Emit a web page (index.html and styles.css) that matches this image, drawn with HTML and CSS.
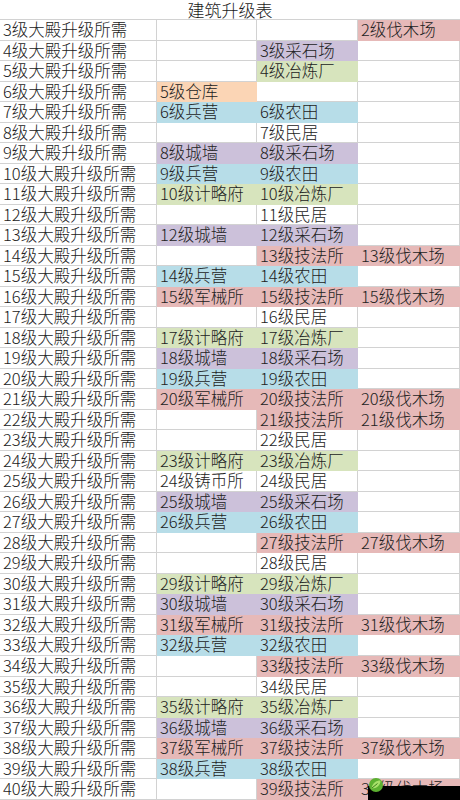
FILE: index.html
```html
<!DOCTYPE html>
<html lang="zh-CN">
<head>
<meta charset="utf-8">
<title>建筑升级表</title>
<link rel="stylesheet" href="styles.css">
</head>
<body>
<div class="sheet">
  <div class="title">建筑升级表</div>

  <div class="c">3级大殿升级所需</div><div class="c"></div><div class="c"></div><div class="c pink">2级伐木场</div>
  <div class="c">4级大殿升级所需</div><div class="c"></div><div class="c purple">3级采石场</div><div class="c"></div>
  <div class="c">5级大殿升级所需</div><div class="c"></div><div class="c green">4级冶炼厂</div><div class="c"></div>
  <div class="c">6级大殿升级所需</div><div class="c orange">5级仓库</div><div class="c"></div><div class="c"></div>
  <div class="c">7级大殿升级所需</div><div class="c blue">6级兵营</div><div class="c blue">6级农田</div><div class="c"></div>
  <div class="c">8级大殿升级所需</div><div class="c"></div><div class="c">7级民居</div><div class="c"></div>
  <div class="c">9级大殿升级所需</div><div class="c purple">8级城墙</div><div class="c purple">8级采石场</div><div class="c"></div>
  <div class="c">10级大殿升级所需</div><div class="c blue">9级兵营</div><div class="c blue">9级农田</div><div class="c"></div>
  <div class="c">11级大殿升级所需</div><div class="c green">10级计略府</div><div class="c green">10级冶炼厂</div><div class="c"></div>
  <div class="c">12级大殿升级所需</div><div class="c"></div><div class="c">11级民居</div><div class="c"></div>
  <div class="c">13级大殿升级所需</div><div class="c purple">12级城墙</div><div class="c purple">12级采石场</div><div class="c"></div>
  <div class="c">14级大殿升级所需</div><div class="c"></div><div class="c pink">13级技法所</div><div class="c pink">13级伐木场</div>
  <div class="c">15级大殿升级所需</div><div class="c blue">14级兵营</div><div class="c blue">14级农田</div><div class="c"></div>
  <div class="c">16级大殿升级所需</div><div class="c pink">15级军械所</div><div class="c pink">15级技法所</div><div class="c pink">15级伐木场</div>
  <div class="c">17级大殿升级所需</div><div class="c"></div><div class="c">16级民居</div><div class="c"></div>
  <div class="c">18级大殿升级所需</div><div class="c green">17级计略府</div><div class="c green">17级冶炼厂</div><div class="c"></div>
  <div class="c">19级大殿升级所需</div><div class="c purple">18级城墙</div><div class="c purple">18级采石场</div><div class="c"></div>
  <div class="c">20级大殿升级所需</div><div class="c blue">19级兵营</div><div class="c blue">19级农田</div><div class="c"></div>
  <div class="c">21级大殿升级所需</div><div class="c pink">20级军械所</div><div class="c pink">20级技法所</div><div class="c pink">20级伐木场</div>
  <div class="c">22级大殿升级所需</div><div class="c"></div><div class="c pink">21级技法所</div><div class="c pink">21级伐木场</div>
  <div class="c">23级大殿升级所需</div><div class="c"></div><div class="c">22级民居</div><div class="c"></div>
  <div class="c">24级大殿升级所需</div><div class="c green">23级计略府</div><div class="c green">23级冶炼厂</div><div class="c"></div>
  <div class="c">25级大殿升级所需</div><div class="c">24级铸币所</div><div class="c">24级民居</div><div class="c"></div>
  <div class="c">26级大殿升级所需</div><div class="c purple">25级城墙</div><div class="c purple">25级采石场</div><div class="c"></div>
  <div class="c">27级大殿升级所需</div><div class="c blue">26级兵营</div><div class="c blue">26级农田</div><div class="c"></div>
  <div class="c">28级大殿升级所需</div><div class="c"></div><div class="c pink">27级技法所</div><div class="c pink">27级伐木场</div>
  <div class="c">29级大殿升级所需</div><div class="c"></div><div class="c">28级民居</div><div class="c"></div>
  <div class="c">30级大殿升级所需</div><div class="c green">29级计略府</div><div class="c green">29级冶炼厂</div><div class="c"></div>
  <div class="c">31级大殿升级所需</div><div class="c purple">30级城墙</div><div class="c purple">30级采石场</div><div class="c"></div>
  <div class="c">32级大殿升级所需</div><div class="c pink">31级军械所</div><div class="c pink">31级技法所</div><div class="c pink">31级伐木场</div>
  <div class="c">33级大殿升级所需</div><div class="c blue">32级兵营</div><div class="c blue">32级农田</div><div class="c"></div>
  <div class="c">34级大殿升级所需</div><div class="c"></div><div class="c pink">33级技法所</div><div class="c pink">33级伐木场</div>
  <div class="c">35级大殿升级所需</div><div class="c"></div><div class="c">34级民居</div><div class="c"></div>
  <div class="c">36级大殿升级所需</div><div class="c green">35级计略府</div><div class="c green">35级冶炼厂</div><div class="c"></div>
  <div class="c">37级大殿升级所需</div><div class="c purple">36级城墙</div><div class="c purple">36级采石场</div><div class="c"></div>
  <div class="c">38级大殿升级所需</div><div class="c pink">37级军械所</div><div class="c pink">37级技法所</div><div class="c pink">37级伐木场</div>
  <div class="c">39级大殿升级所需</div><div class="c blue">38级兵营</div><div class="c blue">38级农田</div><div class="c"></div>
  <div class="c">40级大殿升级所需</div><div class="c"></div><div class="c pink">39级技法所</div><div class="c pink">39级伐木场</div>
</div>
<div class="watermark">
  <svg class="leaf" width="16" height="16" viewBox="0 0 16 16" aria-hidden="true">
    <circle cx="8" cy="8" r="7" fill="#5cb030"/>
    <path d="M3.5 11.5 C4.5 6 8 3.5 12.5 3.5 C12.5 8 9 11.5 3.5 11.5 Z" fill="#a8e06a"/>
    <path d="M4 11 L9.5 6.5" stroke="#3c7f1c" stroke-width="1"/>
  </svg>
</div>
</body>
</html>
```

FILE: styles.css
```css
html, body {
  margin: 0;
  padding: 0;
  background: #ffffff;
}

.sheet {
  width: 460px;
  height: 800px;
  overflow: hidden;
  display: grid;
  grid-template-columns: 157px 100px 101px 102px;
  grid-template-rows: 20px repeat(38, 20.526px);
  font-family: "Noto Sans CJK SC", "Noto Sans", sans-serif;
  font-weight: 300;
  color: #222222;
}

.title {
  grid-column: 1 / 5;
  text-align: center;
  font-size: 17px;
  line-height: 20px;
  border-bottom: 1px solid #d2d2d2;
  box-sizing: border-box;
  color: #1a1a1a;
}

.c {
  box-sizing: border-box;
  border-right: 1px solid #d2d2d2;
  border-bottom: 1px solid #d2d2d2;
  padding-left: 3px;
  font-size: 16.5px;
  line-height: 19.5px;
  white-space: nowrap;
}

.pink   { background: #e6b9b8; border-color: #e6b9b8; }
.blue   { background: #b7dde8; border-color: #b7dde8; }
.purple { background: #ccc1da; border-color: #ccc1da; }
.green  { background: #d7e4bd; border-color: #d7e4bd; }
.orange { background: #fbd5b5; border-color: #fbd5b5; }

/* site watermark in the lower right corner, over the last cell */
.watermark {
  position: fixed;
  right: 0;
  bottom: 0;
  width: 92px;
  height: 14px;
  background: #000000;
  z-index: 10;
}

.leaf {
  position: absolute;
  left: 0;
  top: -9px;
}
```
